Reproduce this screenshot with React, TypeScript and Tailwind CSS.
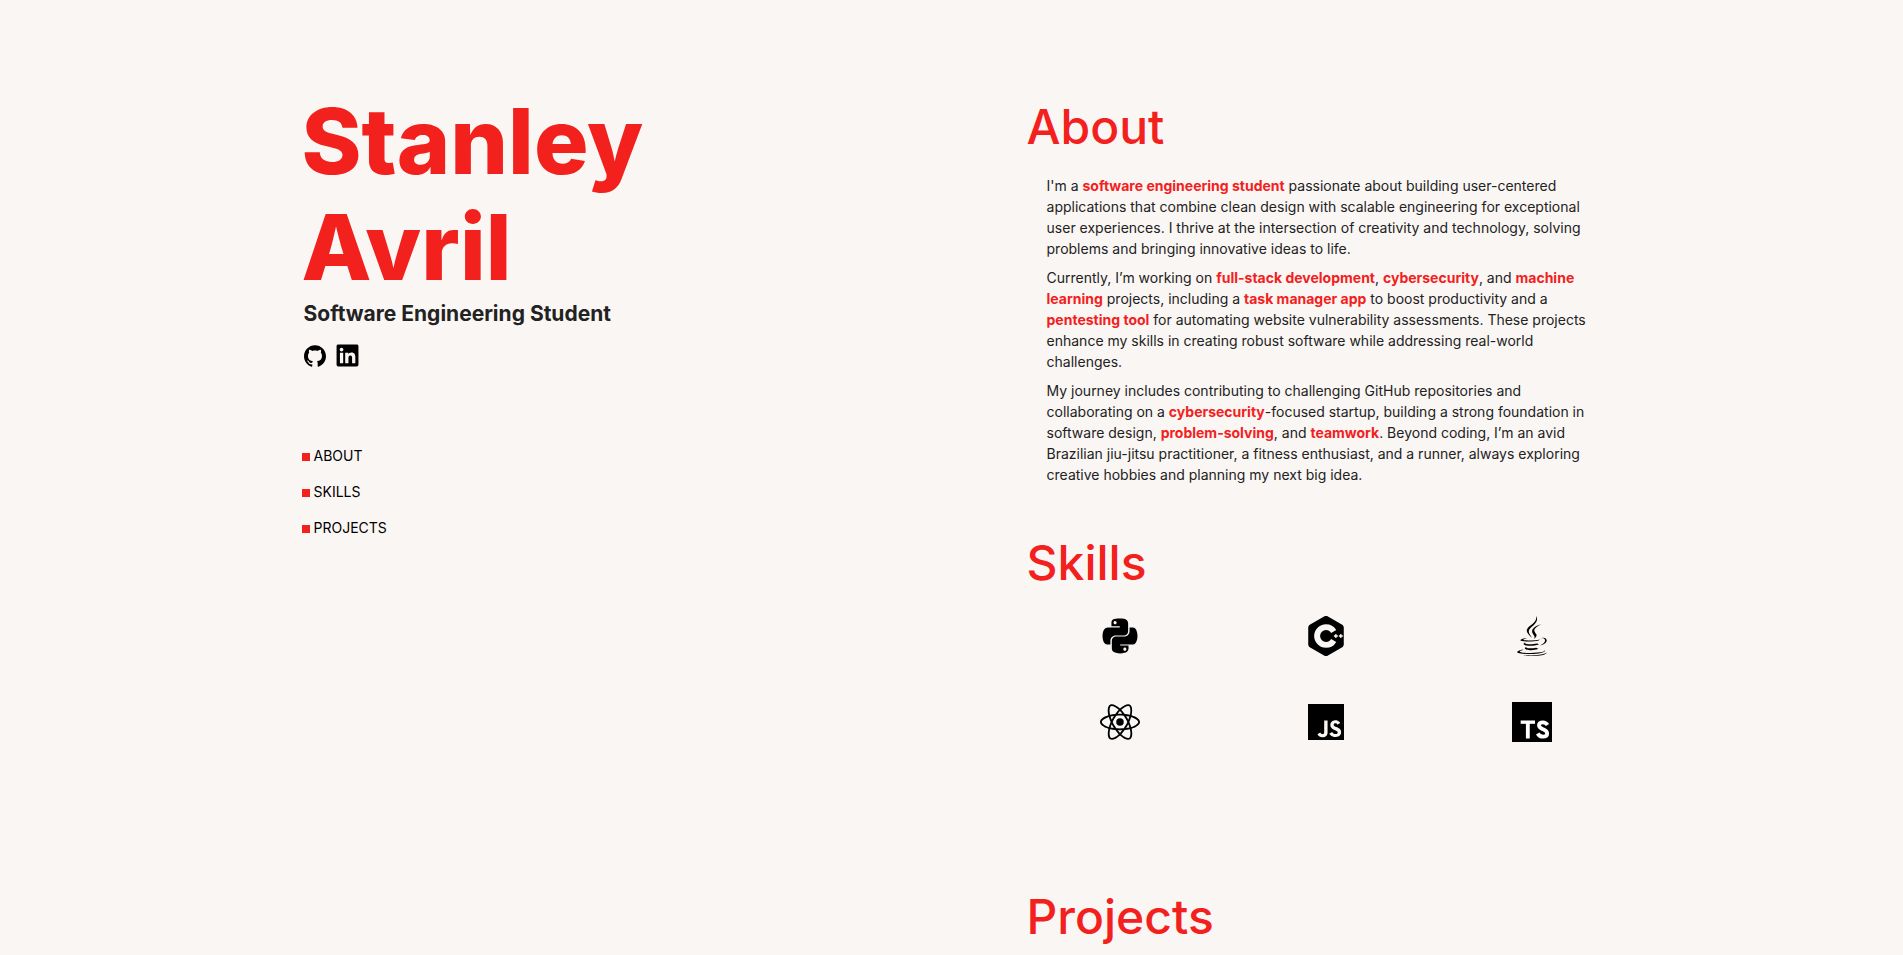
import type { ReactNode } from "react";
import { FaJava, FaLinkedin, FaPython } from "react-icons/fa";
import { SiCplusplus, SiGithub, SiJavascript, SiReact } from "react-icons/si";

function TypeScriptIcon({ size }: { size: number }) {
  return (
    <svg width={size} height={size} viewBox="0 0 24 24" aria-hidden="true">
      <rect width="24" height="24" fill="#000" />
      <g fill="none" stroke="#fff">
        <path strokeWidth="2" d="M5.2 12.1h8.6" />
        <path strokeWidth="2.3" d="M9.5 11.5v10.4" />
        <path
          strokeWidth="2.3"
          d="M21.3 13.8C20.6 12.7 19.7 12.2 18.6 12.2C17.1 12.2 16.2 12.9 16.2 14C16.2 15.4 17.3 15.8 18.7 16.4C20.1 17 21.1 17.5 21.1 18.9C21.1 20.1 20.1 20.8 18.6 20.8C17.2 20.8 16.1 20.2 15.4 18.9"
        />
      </g>
    </svg>
  );
}

function Highlight({ children }: { children: ReactNode }) {
  return <strong className="font-bold text-[#f2211d]">{children}</strong>;
}

function SectionTitle({ children }: { children: ReactNode }) {
  return <h2 className="text-5xl leading-[49px] font-medium text-[#f2211d]">{children}</h2>;
}

const links = [
  { label: "ABOUT", href: "#about" },
  { label: "SKILLS", href: "#skills" },
  { label: "PROJECTS", href: "#projects" },
];

const skills = [
  { name: "Python", icon: <FaPython size={40} /> },
  { name: "C++", icon: <SiCplusplus size={40} /> },
  { name: "Java", icon: <FaJava size={40} /> },
  { name: "React", icon: <SiReact size={40} /> },
  { name: "JavaScript", icon: <SiJavascript size={36} /> },
  { name: "TypeScript", icon: <TypeScriptIcon size={40} /> },
];

export default function App() {
  return (
    <div className="min-h-screen bg-[#faf6f4] font-['Inter',sans-serif] text-[#222222]">
      <div className="mx-auto grid max-w-[1348px] grid-cols-[23fr_19fr] pl-6">
        <header className="pt-[88px]">
          <h1 className="max-w-[400px] text-[91px] leading-[106px] font-extrabold text-[#f2211d]">
            Stanley Avril
          </h1>
          <div className="pl-0.5">
            <p className="text-[21px] leading-7 font-bold">Software Engineering Student</p>
            <div className="mt-[15px] flex items-center gap-[9px] text-black">
              <a href="https://github.com" aria-label="GitHub">
                <SiGithub size={22} />
              </a>
              <a href="https://www.linkedin.com" aria-label="LinkedIn">
                <FaLinkedin size={25} />
              </a>
            </div>
          </div>
          <nav className="mt-[78px]">
            <ul className="flex flex-col gap-4 text-sm text-black">
              {links.map((link) => (
                <li key={link.label}>
                  <a href={link.href} className="flex items-baseline gap-1">
                    <span className="size-2 bg-[#f2211d]" />
                    {link.label}
                  </a>
                </li>
              ))}
            </ul>
          </nav>
        </header>

        <main className="pt-[102px]">
          <section id="about">
            <SectionTitle>About</SectionTitle>
            <div className="mt-6 ml-5 flex max-w-[545px] flex-col gap-2 text-sm leading-[21px]">
              <p>
                I'm a <Highlight>software engineering student</Highlight> passionate about building
                user-centered applications that combine clean design with scalable engineering for
                exceptional user experiences. I thrive at the intersection of creativity and
                technology, solving problems and bringing innovative ideas to life.
              </p>
              <p>
                Currently, I’m working on <Highlight>full-stack development</Highlight>,{" "}
                <Highlight>cybersecurity</Highlight>, and <Highlight>machine learning</Highlight>{" "}
                projects, including a <Highlight>task manager app</Highlight> to boost productivity
                and a <Highlight>pentesting tool</Highlight> for automating website vulnerability
                assessments. These projects enhance my skills in creating robust software while
                addressing real-world challenges.
              </p>
              <p>
                My journey includes contributing to challenging GitHub repositories and
                collaborating on a <Highlight>cybersecurity</Highlight>-focused startup, building a
                strong foundation in software design, <Highlight>problem-solving</Highlight>, and{" "}
                <Highlight>teamwork</Highlight>. Beyond coding, I’m an avid Brazilian jiu-jitsu
                practitioner, a fitness enthusiast, and a runner, always exploring creative hobbies
                and planning my next big idea.
              </p>
            </div>
          </section>

          <section id="skills" className="mt-[53px]">
            <SectionTitle>Skills</SectionTitle>
            <ul className="mt-[29px] grid grid-cols-3 gap-x-[18px] gap-y-[46px] text-black">
              {skills.map((skill) => (
                <li key={skill.name} title={skill.name} className="flex h-10 items-center justify-center">
                  {skill.icon}
                </li>
              ))}
            </ul>
          </section>

          <section id="projects" className="mt-[150px]">
            <SectionTitle>Projects</SectionTitle>
          </section>
        </main>
      </div>
    </div>
  );
}
